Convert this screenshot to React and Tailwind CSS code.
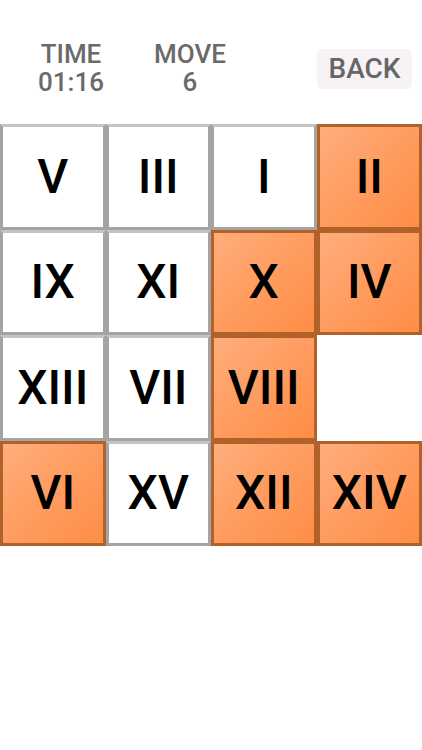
const tiles = [
  { n: 'V', hot: false },
  { n: 'III', hot: false },
  { n: 'I', hot: false },
  { n: 'II', hot: true },
  { n: 'IX', hot: false },
  { n: 'XI', hot: false },
  { n: 'X', hot: true },
  { n: 'IV', hot: true },
  { n: 'XIII', hot: false },
  { n: 'VII', hot: false },
  { n: 'VIII', hot: true },
  null,
  { n: 'VI', hot: true },
  { n: 'XV', hot: false },
  { n: 'XII', hot: true },
  { n: 'XIV', hot: true },
];

function Tile({ tile }) {
  if (!tile) return <div className="aspect-square" />;
  return (
    <div
      className={`aspect-square flex items-center justify-center text-[48px] font-medium text-black leading-none ${
        tile.hot
          ? 'border-[3px] border-[#b0622a] bg-gradient-to-br from-[#ffae7c] via-[#ff9c5f] to-[#ff8d45]'
          : 'border-[3px] border-[#a4a4a4] border-t-[#c4c4c4] bg-white'
      }`}
    >
      {tile.n}
    </div>
  );
}

export default function App() {
  return (
    <div className="w-[422px] h-[750px] bg-white font-['Roboto','Liberation_Sans',sans-serif]">
      <div className="h-[124px] flex items-start pt-[40px] pr-[10px]">
        <div className="w-[142px] flex flex-col items-center text-[26px] font-medium leading-[28px] text-[#6a6a6a]">
          <span>TIME</span>
          <span>01:16</span>
        </div>
        <div className="w-[96px] flex flex-col items-center text-[26px] font-medium leading-[28px] text-[#6a6a6a]">
          <span>MOVE</span>
          <span>6</span>
        </div>
        <button className="ml-auto mt-[9px] w-[95px] h-[40px] rounded-md bg-[#f6f2f6] text-[28px] font-medium leading-none text-[#666666]">
          BACK
        </button>
      </div>
      <div className="grid grid-cols-4 w-full">
        {tiles.map((t, i) => (
          <Tile key={i} tile={t} />
        ))}
      </div>
    </div>
  );
}
